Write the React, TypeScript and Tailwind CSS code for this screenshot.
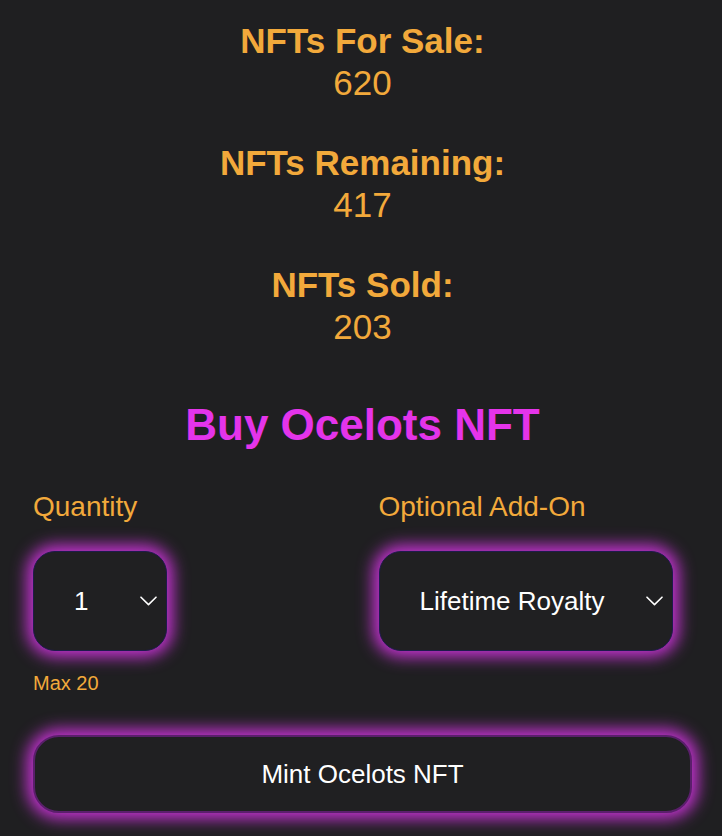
import React from "react";

const stats = [
  { label: "NFTs For Sale:", value: "620" },
  { label: "NFTs Remaining:", value: "417" },
  { label: "NFTs Sold:", value: "203" },
];

function Chevron() {
  return (
    <svg width="17" height="10" viewBox="0 0 17 10" fill="none" className="shrink-0">
      <path d="M1 1.2 L8.5 8.6 L16 1.2" stroke="#ffffff" strokeWidth="1.6" strokeLinecap="round" strokeLinejoin="round" />
    </svg>
  );
}

function SelectBox({ value, width }: { value: string; width: string }) {
  return (
    <div
      className={`${width} h-[100px] flex items-center justify-between pl-[40px] pr-[9px] rounded-[22px] bg-[#202022] border border-[#1e1b4b] shadow-[0_0_16px_6px_rgba(204,52,218,0.95)] text-white text-[26px] leading-[30px]`}
    >
      <span>{value}</span>
      <Chevron />
    </div>
  );
}

export default function App() {
  return (
    <div
      className="min-h-[836px] bg-[#1f1f21] pl-[33px] pr-[30px] pt-[20px] pb-[40px]"
      style={{ fontFamily: '"Liberation Sans", Arial, sans-serif' }}
    >
      <div className="flex flex-col items-center gap-[38px] text-[#f2a93b] text-[35px] leading-[42px]">
        {stats.map((s) => (
          <div key={s.label} className="flex flex-col items-center">
            <div className="font-bold">{s.label}</div>
            <div>{s.value}</div>
          </div>
        ))}
      </div>

      <h1 className="mt-[52px] text-center font-bold text-[44px] leading-[50px] text-[#e434ea]">
        Buy Ocelots NFT
      </h1>

      <div className="mt-[41px] grid grid-cols-2 gap-8">
        <div className="flex flex-col items-start">
          <label className="text-[#f2a93b] text-[28px] leading-[32px]">Quantity</label>
          <div className="mt-[28px]">
            <SelectBox value="1" width="w-[134px]" />
          </div>
          <div className="mt-[20px] text-[#f2a93b] text-[20px] leading-[24px]">Max 20</div>
        </div>
        <div className="flex flex-col items-start">
          <label className="text-[#f2a93b] text-[28px] leading-[32px]">Optional Add-On</label>
          <div className="mt-[28px]">
            <SelectBox value="Lifetime Royalty" width="w-[294px]" />
          </div>
        </div>
      </div>

      <button className="mt-[40px] w-full h-[78px] flex items-center justify-center rounded-[26px] bg-[#202022] border-2 border-[#5a1f6b] shadow-[0_0_16px_6px_rgba(204,52,218,0.95)] text-white text-[26px] leading-[30px]">
        Mint Ocelots NFT
      </button>
    </div>
  );
}
